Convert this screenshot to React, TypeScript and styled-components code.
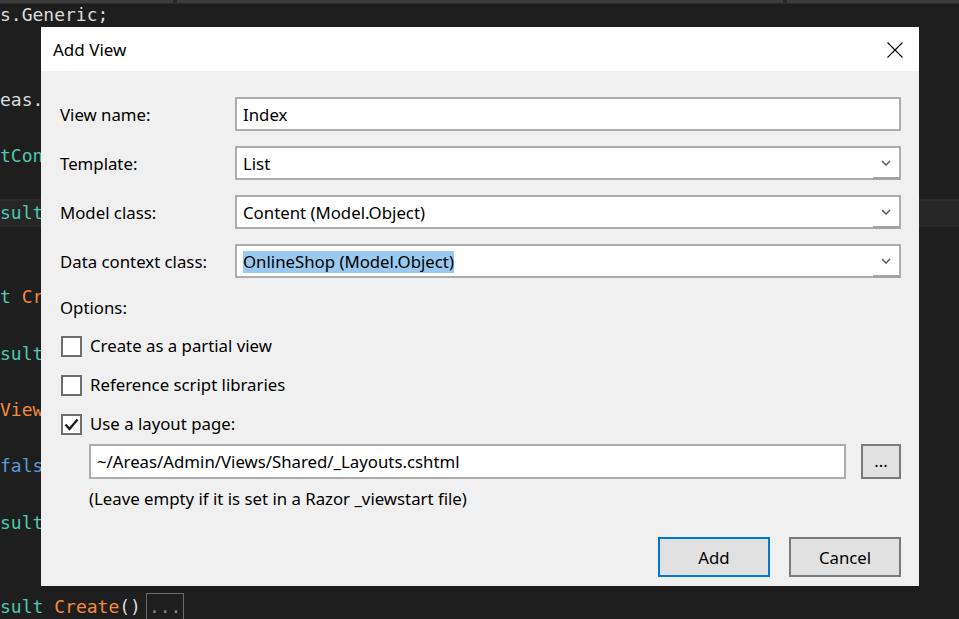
import React from "react";
import styled, { createGlobalStyle } from "styled-components";

const GlobalStyle = createGlobalStyle`
  html, body { margin: 0; padding: 0; background: #1e1e1e; overflow: hidden; }
  * { box-sizing: border-box; }
`;

const Screen = styled.div`
  position: relative;
  width: 959px;
  height: 619px;
  overflow: hidden;
  background: #1e1e1e;
`;

const TabStrip = styled.div`
  display: flex;
  height: 4px;
  gap: 4px;
  background: #2a2a2c;
  padding-bottom: 1px;
`;

const TabSeg = styled.div<{ $w: number }>`
  height: 3px;
  width: ${(p) => p.$w}px;
  flex: ${(p) => (p.$w ? "none" : "1")};
  background: #3d3d40;
`;

const Code = styled.div`
  margin-top: -2.6px;
  font-family: "DejaVu Sans Mono", "Liberation Mono", monospace;
  font-size: 18px;
  color: #dcdcdc;
`;

const Line = styled.div<{ $shift: number; $current?: boolean }>`
  height: 28.2px;
  line-height: 28.2px;
  white-space: pre;
  padding-left: ${(p) => p.$shift}px;
  ${(p) =>
    p.$current
      ? `background: #262626; box-shadow: inset 0 2px 0 #2c2c2c, inset 0 -2px 0 #2c2c2c;`
      : ""}
`;

const Tok = styled.span<{ $c: "type" | "method" | "kw" | "plain" }>`
  color: ${(p) =>
    p.$c === "type"
      ? "#4ec9b0"
      : p.$c === "method"
      ? "#f58b35"
      : p.$c === "kw"
      ? "#569cd6"
      : "#dcdcdc"};
`;

const Collapsed = styled.span`
  display: inline-block;
  margin-left: 5px;
  padding: 0 2px;
  border: 1px solid #6b6b6b;
  color: #8a8a8a;
  line-height: 26px;
`;

const Dialog = styled.div`
  position: absolute;
  left: 41px;
  top: 27px;
  width: 878px;
  height: 559px;
  display: flex;
  flex-direction: column;
  background: #f0f0f0;
  font-family: "Noto Sans", "Open Sans", sans-serif;
  font-size: 16.8px;
  color: #000;
`;

const TitleBar = styled.div`
  height: 44px;
  flex: none;
  background: #fff;
  display: flex;
  align-items: center;
  justify-content: space-between;
  padding: 0 16px 0 12px;
`;

const Title = styled.div`
  font-size: 17px;
`;

const CloseBtn = styled.div`
  width: 16px;
  height: 16px;
  display: flex;
  margin-top: 1px;
`;

const Body = styled.div`
  flex: 1;
  display: flex;
  flex-direction: column;
  padding: 26px 18px 9px 19px;
`;

const FormGrid = styled.div`
  display: grid;
  grid-template-columns: 175px 1fr;
  row-gap: 15px;
  align-items: center;
`;

const Label = styled.div`
  line-height: 22px;
  padding-top: 2px;
`;

const Field = styled.div<{ $combo?: boolean }>`
  position: relative;
  height: 34px;
  background: #fff;
  border: 2px solid #adadad;
  display: flex;
  align-items: center;
  padding-left: 6px;
  padding-top: 1px;
  line-height: 22px;
`;

const Selected = styled.span`
  background: #99c9ef;
`;

const DropArea = styled.div`
  position: absolute;
  right: -2px;
  top: -2px;
  bottom: -2px;
  width: 28px;
  border-bottom: 3px solid #a3a3a3;
  border-right: 2px solid #adadad;
  display: flex;
  align-items: center;
  justify-content: center;
  padding-top: 2px;
`;

const OptionsLabel = styled.div`
  margin-top: 19px;
  line-height: 22px;
`;

const CheckList = styled.div`
  margin-top: 8px;
  display: flex;
  flex-direction: column;
`;

const CheckRow = styled.div`
  height: 39px;
  display: flex;
  align-items: center;
  gap: 8px;
  padding-left: 1px;
  line-height: 22px;
  & > span { margin-top: -2px; }
`;

const Box = styled.div`
  width: 21px;
  height: 21px;
  background: #fff;
  border: 2px solid #6d6d6d;
  display: flex;
  align-items: center;
  justify-content: center;
`;

const PathRow = styled.div`
  display: flex;
  gap: 15px;
  margin-left: 29px;
`;

const PathInput = styled(Field)`
  flex: 1;
  height: 35px;
`;

const BrowseBtn = styled.div`
  width: 40px;
  height: 35px;
  background: #e1e1e1;
  border: 2px solid #7a7a7a;
  display: flex;
  align-items: center;
  justify-content: center;
  line-height: 22px;
  padding-bottom: 2px;
`;

const Hint = styled.div`
  margin-left: 29px;
  margin-top: 9px;
  line-height: 22px;
`;

const ButtonRow = styled.div`
  margin-top: auto;
  display: flex;
  justify-content: flex-end;
  gap: 19px;
`;

const Button = styled.div<{ $default?: boolean }>`
  width: 112px;
  height: 40px;
  background: #e1e1e1;
  border: 2px solid ${(p) => (p.$default ? "#0078d7" : "#7a7a7a")};
  display: flex;
  align-items: center;
  justify-content: center;
  padding-top: 1px;
`;

const Chevron = () => (
  <svg width="10" height="6" viewBox="0 0 10 6">
    <path d="M1 1 L5 5 L9 1" fill="none" stroke="#606060" strokeWidth="1.6" />
  </svg>
);

const Check = () => (
  <svg width="15" height="13" viewBox="0 0 15 13">
    <path d="M1.5 6.5 L5.5 11 L13.5 1.5" fill="none" stroke="#1a1a1a" strokeWidth="2.4" />
  </svg>
);

type T = [string, "type" | "method" | "kw" | "plain"];
const lines: { shift: number; toks: T[]; current?: boolean; fold?: boolean }[] = [
  { shift: -2, toks: [["s.Generic;", "plain"]] },
  { shift: 0, toks: [] },
  { shift: 0, toks: [] },
  { shift: -4, toks: [["eas.A", "plain"]] },
  { shift: 0, toks: [] },
  { shift: -3, toks: [["tCont", "type"]] },
  { shift: 0, toks: [] },
  { shift: -3, toks: [["sult", "type"]], current: true },
  { shift: 0, toks: [] },
  { shift: 0, toks: [] },
  { shift: -1, toks: [["t", "type"], [" ", "plain"], ["Cr", "method"]] },
  { shift: 0, toks: [] },
  { shift: -3, toks: [["sult", "type"]] },
  { shift: 0, toks: [] },
  { shift: -4, toks: [["View", "method"]] },
  { shift: 0, toks: [] },
  { shift: -1, toks: [["false", "kw"]] },
  { shift: 0, toks: [] },
  { shift: -3, toks: [["sult", "type"]] },
  { shift: 0, toks: [] },
  { shift: 0, toks: [] },
  { shift: -5, toks: [["sult", "type"], [" ", "plain"], ["Create", "method"], ["()", "plain"]], fold: true },
];

export default function App() {
  return (
    <>
      <GlobalStyle />
      <Screen>
        <TabStrip>
          <TabSeg $w={173} />
          <TabSeg $w={606} />
          <TabSeg $w={0} />
        </TabStrip>
        <Code>
          {lines.map((l, i) => (
            <Line key={i} $shift={l.shift} $current={l.current}>
              {l.toks.map(([t, c], j) => (
                <Tok key={j} $c={c}>
                  {t}
                </Tok>
              ))}
              {l.fold && <Collapsed>...</Collapsed>}
            </Line>
          ))}
        </Code>

        <Dialog>
          <TitleBar>
            <Title>Add View</Title>
            <CloseBtn>
              <svg width="16" height="16" viewBox="0 0 16 16">
                <path d="M0.5 0.5 L15.5 15.5 M15.5 0.5 L0.5 15.5" stroke="#000" strokeWidth="1.1" />
              </svg>
            </CloseBtn>
          </TitleBar>
          <Body>
            <FormGrid>
              <Label>View name:</Label>
              <Field>Index</Field>
              <Label>Template:</Label>
              <Field $combo>
                List
                <DropArea>
                  <Chevron />
                </DropArea>
              </Field>
              <Label>Model class:</Label>
              <Field $combo>
                Content (Model.Object)
                <DropArea>
                  <Chevron />
                </DropArea>
              </Field>
              <Label>Data context class:</Label>
              <Field $combo>
                <Selected>OnlineShop (Model.Object)</Selected>
                <DropArea>
                  <Chevron />
                </DropArea>
              </Field>
            </FormGrid>
            <OptionsLabel>Options:</OptionsLabel>
            <CheckList>
              <CheckRow>
                <Box />
                <span>Create as a partial view</span>
              </CheckRow>
              <CheckRow>
                <Box />
                <span>Reference script libraries</span>
              </CheckRow>
              <CheckRow>
                <Box>
                  <Check />
                </Box>
                <span>Use a layout page:</span>
              </CheckRow>
            </CheckList>
            <PathRow>
              <PathInput>~/Areas/Admin/Views/Shared/_Layouts.cshtml</PathInput>
              <BrowseBtn>...</BrowseBtn>
            </PathRow>
            <Hint>(Leave empty if it is set in a Razor _viewstart file)</Hint>
            <ButtonRow>
              <Button $default>Add</Button>
              <Button>Cancel</Button>
            </ButtonRow>
          </Body>
        </Dialog>
      </Screen>
    </>
  );
}
